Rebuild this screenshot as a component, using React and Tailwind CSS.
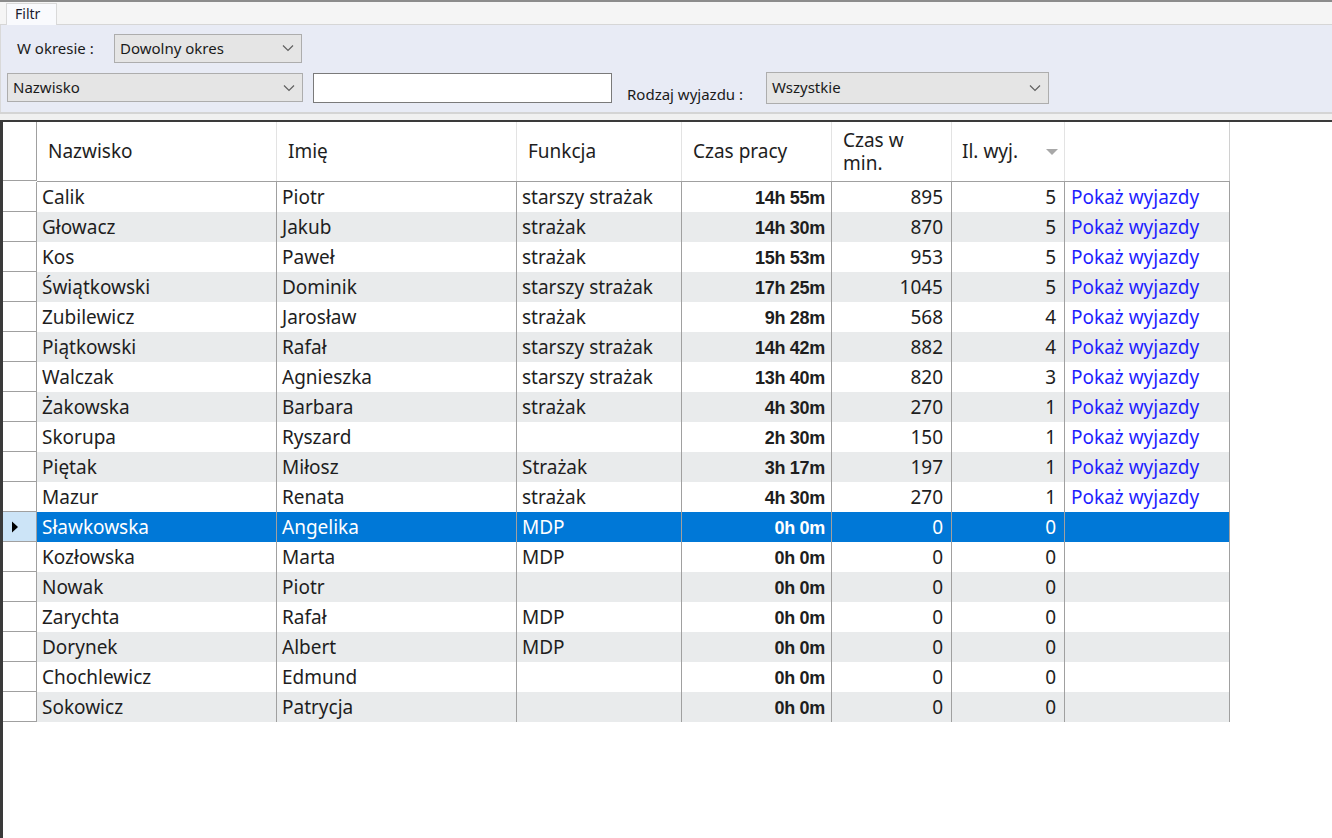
import React from "react";

const rows = [
  ["Calik", "Piotr", "starszy strażak", "14h 55m", "895", "5", true],
  ["Głowacz", "Jakub", "strażak", "14h 30m", "870", "5", true],
  ["Kos", "Paweł", "strażak", "15h 53m", "953", "5", true],
  ["Świątkowski", "Dominik", "starszy strażak", "17h 25m", "1045", "5", true],
  ["Zubilewicz", "Jarosław", "strażak", "9h 28m", "568", "4", true],
  ["Piątkowski", "Rafał", "starszy strażak", "14h 42m", "882", "4", true],
  ["Walczak", "Agnieszka", "starszy strażak", "13h 40m", "820", "3", true],
  ["Żakowska", "Barbara", "strażak", "4h 30m", "270", "1", true],
  ["Skorupa", "Ryszard", "", "2h 30m", "150", "1", true],
  ["Piętak", "Miłosz", "Strażak", "3h 17m", "197", "1", true],
  ["Mazur", "Renata", "strażak", "4h 30m", "270", "1", true],
  ["Sławkowska", "Angelika", "MDP", "0h 0m", "0", "0", false],
  ["Kozłowska", "Marta", "MDP", "0h 0m", "0", "0", false],
  ["Nowak", "Piotr", "", "0h 0m", "0", "0", false],
  ["Zarychta", "Rafał", "MDP", "0h 0m", "0", "0", false],
  ["Dorynek", "Albert", "MDP", "0h 0m", "0", "0", false],
  ["Chochlewicz", "Edmund", "", "0h 0m", "0", "0", false],
  ["Sokowicz", "Patrycja", "", "0h 0m", "0", "0", false],
];

const SELECTED = 11;

function Chevron() {
  return (
    <svg width="12" height="8" viewBox="0 0 12 8" className="shrink-0">
      <path d="M1 1.5 L6 6.5 L11 1.5" fill="none" stroke="#606060" strokeWidth="1.2" />
    </svg>
  );
}

function Combo({ label, className }) {
  return (
    <div
      className={
        "flex items-center justify-between bg-[#e5e5e5] border border-[#adadad] pl-[5px] pr-[7px] text-[15px] text-[#1a1a1a] " +
        className
      }
    >
      <span>{label}</span>
      <Chevron />
    </div>
  );
}

export default function App() {
  return (
    <div
      className="w-[1332px] h-[838px] bg-white overflow-hidden flex flex-col"
      style={{ fontFamily: '"Noto Sans", "Liberation Sans", sans-serif' }}
    >
      {/* top line */}
      <div className="h-[2px] bg-[#8c8c8c] shrink-0" />
      {/* tab strip */}
      <div className="h-[23px] shrink-0 bg-[#f5f5f5] border-b border-[#d6d6d6] flex items-end pl-[6px]">
        <div className="w-[51px] h-[22px] bg-[#f9fafd] border-x border-t border-[#d9d9d9] text-[14px] text-[#1a1a2e] pl-[8px] leading-[20px] -mb-px">
          Filtr
        </div>
      </div>
      {/* filter panel */}
      <div className="h-[87px] shrink-0 bg-[#e8ebf5] border-l border-[#d9d9d9] flex flex-col">
        <div className="flex items-center h-[28px] mt-[9px]">
          <span className="ml-[16px] w-[97px] text-[15px] text-[#1a1a1a]">W okresie :</span>
          <Combo label="Dowolny okres" className="w-[188px] h-[29px]" />
        </div>
        <div className="flex items-center h-[31px] mt-[10px]">
          <Combo label="Nazwisko" className="ml-[6px] w-[296px] h-[29px]" />
          <div className="ml-[10px] w-[299px] h-[30px] bg-white border border-[#7a7a7a]" />
          <span className="ml-[15px] w-[139px] text-[15px] text-[#1a1a1a] mt-[14px] whitespace-nowrap">Rodzaj wyjazdu :</span>
          <Combo label="Wszystkie" className="w-[283px] h-[32px]" />
        </div>
      </div>
      {/* band */}
      <div className="h-[8px] shrink-0 bg-[#f0f0f0] border-t-2 border-[#d4d4d4]" />
      {/* grid */}
      <div className="flex-1 border-t-2 border-l-[3px] border-[#3a3a3a] bg-white">
        {/* header */}
        <div className="flex h-[60px] text-[19px] text-[#1e1e1e]">
          <div className="w-[34px] h-[59px] border-r border-b border-[#a0a0a0] bg-white" />
          <div className="flex border-b border-[#a0a0a0] h-[60px]">
            <div className="w-[240px] border-r border-[#e3e3e3] pl-[11px] flex items-center">Nazwisko</div>
            <div className="w-[240px] border-r border-[#e3e3e3] pl-[11px] flex items-center">Imię</div>
            <div className="w-[165px] border-r border-[#e3e3e3] pl-[11px] flex items-center">Funkcja</div>
            <div className="w-[150px] border-r border-[#e3e3e3] pl-[11px] flex items-center">Czas pracy</div>
            <div className="w-[120px] border-r border-[#e3e3e3] pl-[11px] flex flex-col justify-center">
              <span className="block h-[23px] leading-[23px]">Czas w</span>
              <span className="block h-[23px] leading-[23px]">min.</span>
            </div>
            <div className="w-[113px] border-r border-[#e3e3e3] pl-[10px] pr-[5px] flex items-center justify-between">
              <span>Il. wyj.</span>
              <svg width="14" height="8" viewBox="0 0 14 8">
                <path d="M1 1 L13 1 L7 7 Z" fill="#a8a8a8" />
              </svg>
            </div>
            <div className="w-[165px] border-r border-[#d0d0d0]" />
          </div>
        </div>
        {/* rows */}
        {rows.map((r, i) => {
          const sel = i === SELECTED;
          const bg = sel ? "bg-[#0078d7]" : i % 2 === 1 ? "bg-[#e9ebec]" : "bg-white";
          const fg = sel ? "text-white" : "text-[#1e1e1e]";
          return (
            <div key={i} className="flex h-[30px] text-[19px]">
              <div
                className={
                  "w-[34px] h-[30px] border-r border-b border-[#a0a0a0] flex items-center pl-[8px] " +
                  (sel ? "bg-[#cce4f7]" : "bg-white")
                }
              >
                {sel && (
                  <svg width="8" height="12" viewBox="0 0 8 12">
                    <path d="M1 0.5 L7 6 L1 11.5 Z" fill="#000" />
                  </svg>
                )}
              </div>
              <div className={"flex h-[30px] " + bg + " " + fg}>
                <div className="w-[240px] border-r border-[#a0a0a0] pl-[5px] flex items-center whitespace-nowrap">{r[0]}</div>
                <div className="w-[240px] border-r border-[#a0a0a0] pl-[5px] flex items-center whitespace-nowrap">{r[1]}</div>
                <div className="w-[165px] border-r border-[#a0a0a0] pl-[5px] flex items-center whitespace-nowrap">{r[2]}</div>
                <div
                  className="w-[150px] border-r border-[#a0a0a0] pr-[6px] pt-[2px] flex items-center justify-end font-bold text-[18px] tracking-[-0.3px] whitespace-nowrap"
                  style={{ fontFamily: '"Liberation Sans", Arial, sans-serif' }}
                >
                  {r[3]}
                </div>
                <div className="w-[120px] border-r border-[#a0a0a0] pr-[8px] flex items-center justify-end">{r[4]}</div>
                <div className="w-[113px] border-r border-[#a0a0a0] pr-[8px] flex items-center justify-end">{r[5]}</div>
                <div className="w-[165px] border-r border-[#a0a0a0] pl-[6px] flex items-center whitespace-nowrap">
                  {r[6] && <span className="text-[#1f1fff]">Pokaż wyjazdy</span>}
                </div>
              </div>
            </div>
          );
        })}
      </div>
    </div>
  );
}
